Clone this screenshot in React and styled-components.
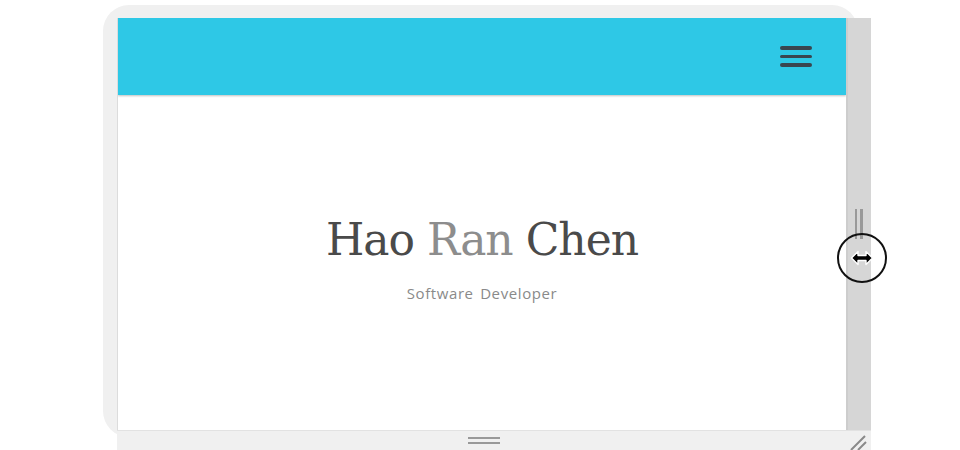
import styled, { createGlobalStyle } from "styled-components";

const GlobalStyle = createGlobalStyle`
  html, body {
    margin: 0;
    padding: 0;
    background: #ffffff;
  }
  body {
    width: 960px;
    height: 450px;
    overflow: hidden;
  }
`;

const Stage = styled.div`
  padding: 5px 0 0 103px;
  width: 960px;
  height: 450px;
  box-sizing: border-box;
`;

const Panel = styled.div`
  width: 755px;
  height: 432px;
  border-radius: 26px;
  background: #f0f0f0;
  padding: 13px 0 0 14px;
  box-sizing: border-box;
`;

const Resizable = styled.div`
  display: grid;
  grid-template-columns: 729px 25px;
  grid-template-rows: 412px 20px;
  width: 754px;
`;

const Frame = styled.div`
  display: flex;
  flex-direction: column;
  background: #ffffff;
  border-left: 1px solid #dcdcdc;
  box-sizing: border-box;
  overflow: hidden;
`;

const Header = styled.header`
  flex: 0 0 77px;
  display: flex;
  align-items: center;
  justify-content: flex-end;
  padding-right: 34px;
  background: #2ec8e6;
  box-shadow: 0 1px 2px rgba(0, 0, 0, 0.25);
  position: relative;
  z-index: 1;
`;

const Burger = styled.button`
  display: flex;
  flex-direction: column;
  gap: 5px;
  width: 32px;
  padding: 0;
  border: 0;
  background: none;
`;

const BurgerLine = styled.span`
  display: block;
  height: 3.5px;
  border-radius: 2px;
  background: #394650;
`;

const Hero = styled.main`
  flex: 1;
  display: flex;
  flex-direction: column;
  align-items: center;
  justify-content: center;
  padding-bottom: 8px;
`;

const Name = styled.h1`
  margin: 0;
  font-family: "DejaVu Serif", "Liberation Serif", serif;
  font-weight: 400;
  font-size: 44px;
  letter-spacing: -1px;
  line-height: 1.2;
  color: #4a4a4a;
`;

const Middle = styled.span`
  color: #8d8d8d;
`;

const Role = styled.p`
  margin: 16px 0 0;
  font-family: "Open Sans", "Liberation Sans", sans-serif;
  font-size: 15px;
  letter-spacing: 0.6px;
  word-spacing: 2px;
  color: #8a8a8a;
`;

const SideBar = styled.div`
  display: flex;
  align-items: center;
  justify-content: center;
  background: #d6d6d6;
  border-left: 2px solid #cdcdcd;
  box-sizing: border-box;
  position: relative;
`;

const Grip = styled.div`
  display: flex;
  gap: 3px;
  margin-left: -2px;
`;

const GripLine = styled.span`
  width: 2.5px;
  height: 30px;
  background: #999;
`;

const Cursor = styled.div`
  position: absolute;
  left: -11px;
  top: 215px;
  width: 46px;
  height: 46px;
  border: 2px solid #111;
  border-radius: 50%;
  display: flex;
  align-items: center;
  justify-content: center;
`;

const BottomBar = styled.div`
  grid-column: 1 / span 2;
  display: flex;
  align-items: center;
  justify-content: center;
  position: relative;
  background: #f0f0f0;
  border-top: 1px solid #e2e2e2;
  box-sizing: border-box;
`;

const BottomGrip = styled.div`
  display: flex;
  flex-direction: column;
  gap: 3px;
  margin-right: 20px;
`;

const BottomGripLine = styled.span`
  width: 32px;
  height: 2px;
  background: #999;
`;

const Corner = styled.svg`
  position: absolute;
  right: 4px;
  bottom: 0;
`;

const ArrowIcon = () => (
  <svg width="24" height="16" viewBox="0 0 24 16">
    <path
      d="M1.5 8 L8 1.5 L8 5.5 L16 5.5 L16 1.5 L22.5 8 L16 14.5 L16 10.5 L8 10.5 L8 14.5 Z"
      fill="#000"
      stroke="#fff"
      strokeWidth="1.4"
      strokeLinejoin="round"
    />
  </svg>
);

const App = () => {
  return (
    <>
      <GlobalStyle />
      <Stage>
        <Panel>
          <Resizable>
            <Frame>
              <Header>
                <Burger aria-label="Menu">
                  <BurgerLine />
                  <BurgerLine />
                  <BurgerLine />
                </Burger>
              </Header>
              <Hero>
                <Name>
                  Hao <Middle>Ran</Middle> Chen
                </Name>
                <Role>Software Developer</Role>
              </Hero>
            </Frame>
            <SideBar>
              <Grip>
                <GripLine />
                <GripLine />
              </Grip>
              <Cursor>
                <ArrowIcon />
              </Cursor>
            </SideBar>
            <BottomBar>
              <BottomGrip>
                <BottomGripLine />
                <BottomGripLine />
              </BottomGrip>
              <Corner width="18" height="16" viewBox="0 0 18 16">
                <path d="M2 16 L16 2 M9 16 L17 8" stroke="#8a8a8a" strokeWidth="2" />
              </Corner>
            </BottomBar>
          </Resizable>
        </Panel>
      </Stage>
    </>
  );
};

export default App;
